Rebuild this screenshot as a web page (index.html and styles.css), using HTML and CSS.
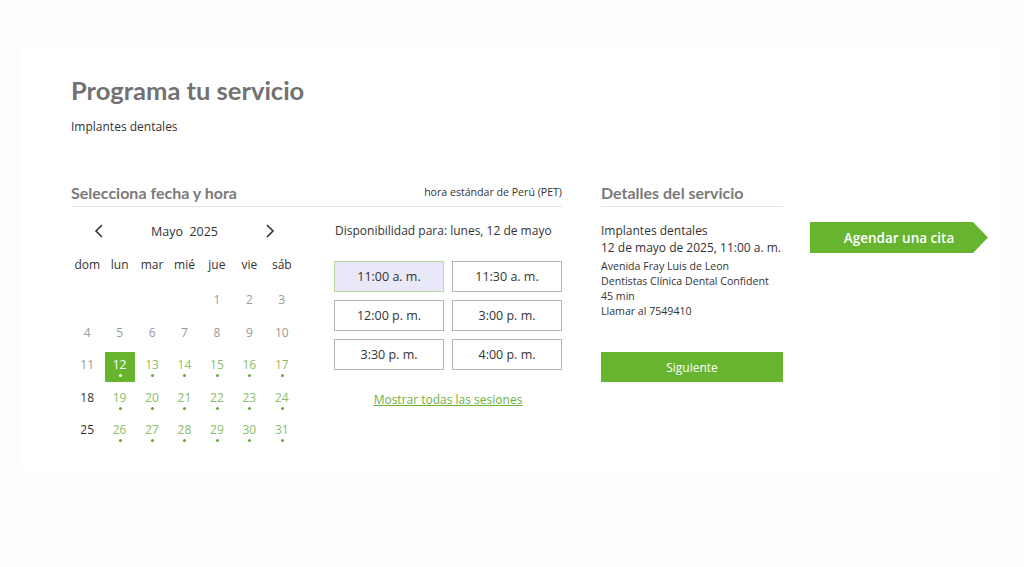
FILE: index.html
```html
<!DOCTYPE html>
<html>
<head>
    <title>Programa tu servicio</title>
    <link rel="stylesheet" href="styles.css">
</head>
<body>
    <div class="panel">
        <h1 class="title">Programa tu servicio</h1>
        <p class="service">Implantes dentales</p>

        <div class="main">
            <div class="picker">
                <div class="section-head">
                    <h2>Selecciona fecha y hora</h2>
                    <span class="tz">hora estándar de Perú (PET)</span>
                </div>
                <div class="picker-body">
                    <div class="calendar">
                        <div class="cal-nav">
                            <span class="chev">
                                <svg width="10" height="14" viewBox="0 0 10 14"><path d="M8 1 L2 7 L8 13" fill="none" stroke="#333" stroke-width="1.6"/></svg>
                            </span>
                            <span class="month">Mayo&nbsp;&nbsp;2025</span>
                            <span class="chev">
                                <svg width="10" height="14" viewBox="0 0 10 14"><path d="M2 1 L8 7 L2 13" fill="none" stroke="#333" stroke-width="1.6"/></svg>
                            </span>
                        </div>
                        <div class="weekdays">
                            <span>dom</span><span>lun</span><span>mar</span><span>mié</span><span>jue</span><span>vie</span><span>sáb</span>
                        </div>
                        <div class="days">
                            <span></span><span></span><span></span><span></span>
                            <span class="day past">1</span>
                            <span class="day past">2</span>
                            <span class="day past">3</span>
                            <span class="day past">4</span>
                            <span class="day past">5</span>
                            <span class="day past">6</span>
                            <span class="day past">7</span>
                            <span class="day past">8</span>
                            <span class="day past">9</span>
                            <span class="day past">10</span>
                            <span class="day past">11</span>
                            <span class="day open selected">12</span>
                            <span class="day open">13</span>
                            <span class="day open">14</span>
                            <span class="day open">15</span>
                            <span class="day open">16</span>
                            <span class="day open">17</span>
                            <span class="day">18</span>
                            <span class="day open">19</span>
                            <span class="day open">20</span>
                            <span class="day open">21</span>
                            <span class="day open">22</span>
                            <span class="day open">23</span>
                            <span class="day open">24</span>
                            <span class="day">25</span>
                            <span class="day open">26</span>
                            <span class="day open">27</span>
                            <span class="day open">28</span>
                            <span class="day open">29</span>
                            <span class="day open">30</span>
                            <span class="day open">31</span>
                        </div>
                    </div>
                    <div class="times">
                        <p class="avail">Disponibilidad para: lunes, 12 de mayo</p>
                        <div class="slots">
                            <button class="slot active">11:00 a. m.</button>
                            <button class="slot">11:30 a. m.</button>
                            <button class="slot">12:00 p. m.</button>
                            <button class="slot">3:00 p. m.</button>
                            <button class="slot">3:30 p. m.</button>
                            <button class="slot">4:00 p. m.</button>
                        </div>
                        <a class="show-all" href="#">Mostrar todas las sesiones</a>
                    </div>
                </div>
            </div>

            <div class="details">
                <div class="section-head">
                    <h2>Detalles del servicio</h2>
                </div>
                <div class="details-main">
                    <div>Implantes dentales</div>
                    <div>12 de mayo de 2025, 11:00 a. m.</div>
                </div>
                <div class="details-extra">
                    <div>Avenida Fray Luis de Leon</div>
                    <div>Dentistas Clínica Dental Confident</div>
                    <div>45 min</div>
                    <div>Llamar al 7549410</div>
                </div>
                <button class="btn-next">Siguiente</button>
            </div>

            <button class="btn-book">Agendar una cita</button>
        </div>
    </div>
</body>
</html>
```

FILE: styles.css
```css
body {
    margin: 0;
    background-color: #fdfdfd;
    font-family: "Open Sans", Arial, sans-serif;
    color: #333;
}

.panel {
    margin: 47px 24px 0 20px;
    height: 423px;
    background-color: #fff;
    padding: 28px 0 0 51px;
    box-sizing: border-box;
}

.title {
    margin: 0;
    font-family: Lato, "Open Sans", sans-serif;
    font-weight: 700;
    font-size: 25.5px;
    line-height: 30px;
    color: #727272;
}

.service {
    margin: 13px 0 0;
    font-size: 12px;
    line-height: 18px;
}

.main {
    display: flex;
    align-items: flex-start;
    margin-top: 46px;
}

.section-head {
    display: flex;
    justify-content: space-between;
    align-items: center;
    height: 20px;
    padding-bottom: 4px;
    border-bottom: 1px solid #e4e4e4;
}

.section-head h2 {
    margin: 0;
    font-family: Lato, "Open Sans", sans-serif;
    font-weight: 700;
    font-size: 16px;
    color: #7a7a7a;
}

.tz {
    font-size: 10.6px;
    color: #333;
}

.picker {
    width: 491px;
}

.picker-body {
    display: flex;
    gap: 36px;
}

.calendar {
    width: 227px;
    font-size: 12px;
}

.cal-nav {
    display: flex;
    justify-content: space-between;
    align-items: center;
    height: 26px;
    margin-top: 11px;
    padding: 0 18px;
}

.chev {
    width: 20px;
    display: flex;
    justify-content: center;
}

.month {
    font-size: 12.5px;
}

.weekdays {
    display: grid;
    grid-template-columns: repeat(7, 1fr);
    height: 30px;
    margin-top: 5px;
    align-items: center;
    text-align: center;
}

.days {
    display: grid;
    grid-template-columns: repeat(7, 1fr);
    grid-auto-rows: 32.5px;
    margin-top: 7px;
    justify-items: center;
    align-items: center;
}

.day {
    width: 30px;
    height: 30px;
    box-sizing: border-box;
    padding-top: 5px;
    text-align: center;
    line-height: 16px;
    position: relative;
}

.day.past {
    color: #9a9a9a;
}

.day.open {
    color: #8abd68;
}

.day.open::after {
    content: "";
    position: absolute;
    left: 14px;
    top: 22px;
    width: 3px;
    height: 3px;
    border-radius: 50%;
    background-color: #63a93a;
}

.day.selected {
    background-color: #67b52f;
    color: #fff;
    border-radius: 1px;
}

.day.selected::after {
    background-color: #fff;
}

.times {
    width: 228px;
}

.avail {
    margin: 15px 0 0 1px;
    font-size: 12px;
    line-height: 18px;
    white-space: nowrap;
}

.slots {
    display: grid;
    grid-template-columns: 110px 110px;
    grid-auto-rows: 31px;
    gap: 8px;
    margin-top: 21px;
}

.slot {
    border: 1px solid #b4b4b4;
    background-color: #fff;
    font-family: "Open Sans", Arial, sans-serif;
    font-size: 12.5px;
    color: #333;
    padding: 0;
}

.slot.active {
    background-color: #e8e8f8;
    border-color: #b6d89e;
}

.show-all {
    display: block;
    margin-top: 21px;
    text-align: center;
    font-size: 12px;
    line-height: 18px;
    color: #6cb33f;
}

.details {
    width: 182px;
    margin-left: 39px;
}

.details-main {
    margin-top: 15px;
    font-size: 12px;
    line-height: 17px;
    white-space: nowrap;
}

.details-extra {
    margin-top: 3px;
    font-size: 10.6px;
    line-height: 15px;
}

.btn-next {
    display: block;
    width: 182px;
    height: 30px;
    margin-top: 33px;
    border: none;
    background-color: #67b52f;
    color: #fff;
    font-family: "Open Sans", Arial, sans-serif;
    font-size: 12px;
}

.btn-book {
    width: 178px;
    height: 31px;
    margin: 40px 0 0 27px;
    padding: 0;
    border: none;
    background-color: #67b52f;
    color: #fff;
    font-family: "Open Sans", Arial, sans-serif;
    font-weight: 600;
    font-size: 13.5px;
    clip-path: polygon(0 0, 163px 0, 100% 50%, 163px 100%, 0 100%);
}
```
